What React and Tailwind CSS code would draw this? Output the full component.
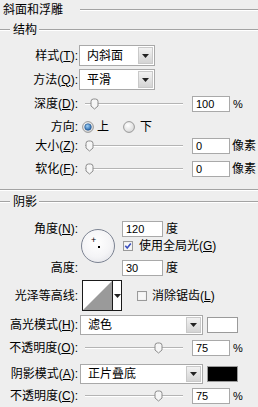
import React from "react";

// Photoshop "斜面和浮雕" layer-style panel

function U({ children }) {
  return <span className="underline underline-offset-[1px]">{children}</span>;
}

function Etch({ className = "" }) {
  return <div className={`h-[2px] border-t border-b border-t-[#a3a3a3] border-b-white ${className}`} />;
}

function Label({ children }) {
  return <div className="w-[78px] shrink-0 text-right whitespace-nowrap">{children}</div>;
}

function Arrow() {
  return (
    <svg width="7" height="4" viewBox="0 0 7 4">
      <polygon points="0,0 7,0 3.5,4" fill="#222" />
    </svg>
  );
}

function Select({ value, className }) {
  return (
    <div className={`flex h-full border border-[#a9a9a9] bg-white ${className}`}>
      <div className="flex flex-1 items-center pl-[7px]">{value}</div>
      <div className="m-[1px] flex w-[15px] items-center justify-center border border-[#c9c9c9] bg-gradient-to-b from-[#f2f2f2] to-[#d4d4d4]">
        <Arrow />
      </div>
    </div>
  );
}

function NumBox({ value, className = "" }) {
  return (
    <div className={`flex h-full w-[38px] items-center border border-[#a9a9a9] bg-white pl-[3px] font-['Liberation_Sans',sans-serif] text-[11px] ${className}`}>
      {value}
    </div>
  );
}

function Thumb({ className }) {
  return (
    <svg width="9" height="12" viewBox="0 0 9 12" className={`absolute top-1/2 -translate-y-1/2 ${className}`}>
      <path d="M1 3.5 Q1 1 3.5 1 H5.5 Q8 1 8 3.5 V8 L4.5 11 L1 8 Z" fill="#f6f6f6" stroke="#8c8c8c" />
    </svg>
  );
}

function Slider({ thumb }) {
  return (
    <div className="relative ml-[7px] h-full w-[98px] shrink-0">
      <div className="absolute left-0 right-0 top-[7px] h-[2px] border-t border-b border-t-[#b4b4b4] border-b-white" />
      <Thumb className={thumb} />
    </div>
  );
}

function Radio({ on }) {
  return (
    <svg width="12" height="12" viewBox="0 0 12 12" className="shrink-0">
      <defs>
        <radialGradient id="rOff" cx="0.4" cy="0.35" r="0.7">
          <stop offset="0" stopColor="#ffffff" />
          <stop offset="1" stopColor="#d6d6d6" />
        </radialGradient>
        <radialGradient id="rOn" cx="0.4" cy="0.35" r="0.7">
          <stop offset="0" stopColor="#9fd0f5" />
          <stop offset="1" stopColor="#1f5fa6" />
        </radialGradient>
      </defs>
      <circle cx="6" cy="6" r="5.4" fill="url(#rOff)" stroke="#8f8f8f" strokeWidth="0.9" />
      {on && <circle cx="6" cy="6" r="3.3" fill="url(#rOn)" stroke="#1b4d86" strokeWidth="0.6" />}
    </svg>
  );
}

function Check({ on }) {
  return (
    <svg width="10" height="10" viewBox="0 0 10 10" className="shrink-0">
      <rect x="0.5" y="0.5" width="9" height="9" fill="#ececec" stroke="#9a9a9a" />
      <rect x="1.5" y="1.5" width="7" height="7" fill="#f7f7f7" />
      {on && <path d="M2.3 4.8 L4.2 7 L7.8 2.4" fill="none" stroke="#3b4fbf" strokeWidth="1.6" />}
    </svg>
  );
}

function Header({ children }) {
  return (
    <div className="flex h-[21px] shrink-0 items-center">
      <Etch className="w-[10px]" />
      <span className="px-[3px]">{children}</span>
      <Etch className="ml-[-1px] flex-1" />
    </div>
  );
}

export default function App() {
  return (
    <div className="flex h-[407px] w-[258px] flex-col overflow-hidden bg-[#eeeeee] font-['Liberation_Sans','Noto_Sans_CJK_SC',sans-serif] text-[12px] leading-[14px] text-black">
      <div className="flex h-[19px] shrink-0 items-center">
        <span className="w-[80px] pl-[3px]">斜面和浮雕</span>
        <Etch className="flex-1" />
      </div>

      <Header>结构</Header>

      <div className="mt-[5px] flex h-[21px] shrink-0 items-center">
        <Label>样式(<U>T</U>):</Label>
        <Select value="内斜面" className="ml-[1px] w-[76px]" />
      </div>
      <div className="mt-[3px] flex h-[21px] shrink-0 items-center">
        <Label>方法(<U>Q</U>):</Label>
        <Select value="平滑" className="ml-[1px] w-[76px]" />
      </div>

      <div className="mt-[6px] flex h-[16px] shrink-0 items-center">
        <Label>深度(<U>D</U>):</Label>
        <Slider thumb="left-[5px]" />
        <NumBox value="100" className="ml-[9px]" />
        <span className="ml-[3px] font-['Liberation_Sans',sans-serif] text-[11px]">%</span>
      </div>

      <div className="mt-[7px] flex h-[16px] shrink-0 items-center">
        <Label>方向:</Label>
        <div className="ml-[4px]"><Radio on /></div>
        <span className="ml-[3px]">上</span>
        <div className="ml-[14px]"><Radio /></div>
        <span className="ml-[5px]">下</span>
      </div>

      <div className="mt-[3px] flex h-[16px] shrink-0 items-center">
        <Label>大小(<U>Z</U>):</Label>
        <Slider thumb="left-[0px]" />
        <NumBox value="0" className="ml-[9px]" />
        <span className="ml-[2px]">像素</span>
      </div>
      <div className="mt-[7px] flex h-[16px] shrink-0 items-center">
        <Label>软化(<U>F</U>):</Label>
        <Slider thumb="left-[0px]" />
        <NumBox value="0" className="ml-[9px]" />
        <span className="ml-[2px]">像素</span>
      </div>

      <Etch className="mt-[12px] shrink-0" />

      <Header>阴影</Header>

      <div className="flex h-[65px] shrink-0">
        <div className="flex w-[78px] shrink-0 flex-col">
          <div className="mt-[9px] flex h-[16px] items-center justify-end">角度(<U>N</U>):</div>
          <div className="mt-[23px] flex h-[16px] items-center justify-end">高度:</div>
        </div>
        <div className="relative ml-[3px] mt-[17px] h-[34px] w-[34px] shrink-0 rounded-full border-[1.5px] border-[#7c8392] bg-[radial-gradient(circle_at_45%_40%,#ffffff_0%,#f4f4f6_55%,#dcdde3_100%)]">
          <span className="absolute left-[9px] top-[6px] text-[9px] leading-[9px]">+</span>
          <span className="absolute left-[16px] top-[16px] h-[2px] w-[2px] bg-black" />
        </div>
        <div className="ml-[7px] flex flex-col">
          <div className="mt-[9px] flex h-[16px] items-center">
            <NumBox value="120" className="w-[41px]" />
            <span className="ml-[3px]">度</span>
          </div>
          <div className="flex h-[17px] items-center">
            <div className="ml-[1px]"><Check on /></div>
            <span className="ml-[6px]">使用全局光(<U>G</U>)</span>
          </div>
          <div className="mt-[6px] flex h-[16px] items-center">
            <NumBox value="30" className="w-[41px]" />
            <span className="ml-[3px]">度</span>
          </div>
        </div>
      </div>

      <div className="mt-[3px] flex h-[31px] shrink-0 items-center">
        <Label>光泽等高线:</Label>
        <div className="ml-[4px] flex h-full w-[40px] border border-[#1a1a1a] bg-white">
          <svg width="29" height="29" viewBox="0 0 29 29" className="shrink-0">
            <polygon points="0,29 29,0 29,29" fill="#9a9a9a" />
          </svg>
          <div className="flex flex-1 items-center justify-center border-l border-[#1a1a1a]">
            <Arrow />
          </div>
        </div>
        <div className="ml-[15px]"><Check /></div>
        <span className="ml-[5px]">消除锯齿(<U>L</U>)</span>
      </div>

      <div className="mt-[4px] flex h-[20px] shrink-0 items-center">
        <Label>高光模式(<U>H</U>):</Label>
        <Select value="滤色" className="ml-[2px] w-[123px]" />
        <div className="ml-[4px] h-[16px] w-[31px] border border-[#9a9a9a] bg-white" />
      </div>
      <div className="mt-[5px] flex h-[16px] shrink-0 items-center">
        <Label>不透明度(<U>O</U>):</Label>
        <Slider thumb="left-[69px]" />
        <NumBox value="75" className="ml-[9px]" />
        <span className="ml-[3px] font-['Liberation_Sans',sans-serif] text-[11px]">%</span>
      </div>

      <div className="mt-[8px] flex h-[20px] shrink-0 items-center">
        <Label>阴影模式(<U>A</U>):</Label>
        <Select value="正片叠底" className="ml-[2px] w-[123px]" />
        <div className="ml-[4px] h-[16px] w-[31px] border border-[#9a9a9a] bg-black" />
      </div>
      <div className="mt-[4px] flex h-[16px] shrink-0 items-center">
        <Label>不透明度(<U>C</U>):</Label>
        <Slider thumb="left-[69px]" />
        <NumBox value="75" className="ml-[9px]" />
        <span className="ml-[3px] font-['Liberation_Sans',sans-serif] text-[11px]">%</span>
      </div>
    </div>
  );
}
